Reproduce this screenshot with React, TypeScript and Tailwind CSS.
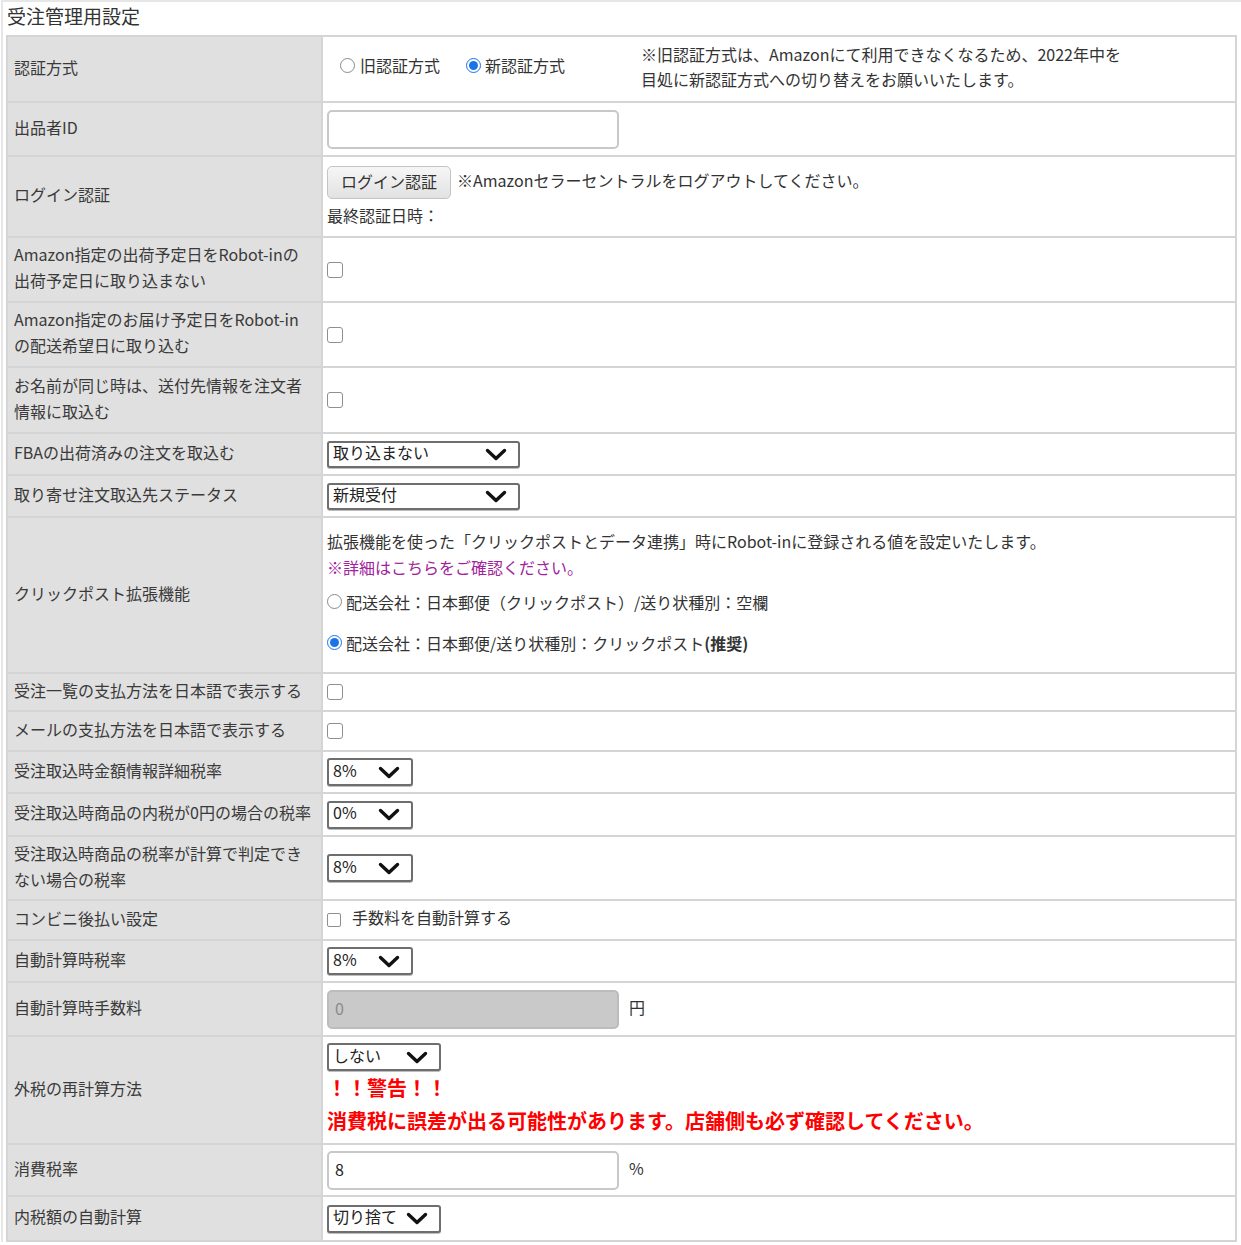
import React from "react";

const Chevron = () => (
  <svg width="22" height="13" viewBox="0 0 22 13" className="shrink-0">
    <path d="M2.5 2.5 L11 10.5 L19.5 2.5" fill="none" stroke="#111" strokeWidth="3.4" strokeLinecap="round" strokeLinejoin="round" />
  </svg>
);

const Select = ({ value, w, h = "h-[28px]" }: { value: string; w: string; h?: string }) => (
  <div className={`${w} ${h} flex items-center justify-between rounded-[3px] border-2 border-[#6e6e6e] bg-white pl-[4px] pr-[11px] shadow-[0_1px_0_#bdbdbd]`}>
    <span className="-mt-[5px] leading-none text-[#222]">{value}</span>
    <Chevron />
  </div>
);

const Radio = ({ checked = false }: { checked?: boolean }) =>
  checked ? (
    <span className="flex h-[15px] w-[15px] shrink-0 items-center justify-center rounded-full border-[1.5px] border-[#1a73e8] bg-white">
      <span className="h-[9px] w-[9px] rounded-full bg-[#1a73e8]" />
    </span>
  ) : (
    <span className="h-[15px] w-[15px] shrink-0 rounded-full border-[1.5px] border-[#8a8a8a] bg-white" />
  );

const Checkbox = ({ small = false }: { small?: boolean }) => (
  <span
    className={
      small
        ? "h-[14px] w-[14px] shrink-0 rounded-[2px] border-[1.5px] border-[#8f8f8f] bg-white"
        : "h-[16px] w-[16px] shrink-0 rounded-[3px] border-[1.5px] border-[#8f8f8f] bg-white"
    }
  />
);

const TextBox = ({ value = "", disabled = false }: { value?: string; disabled?: boolean }) => (
  <div
    className={
      disabled
        ? "flex h-[39px] w-[292px] items-center rounded-[5px] border-2 border-[#bcbcbc] bg-[#c9c9c9] px-[6px] pb-[3px] text-[#8a8a8a]"
        : "flex h-[39px] w-[292px] items-center rounded-[5px] border-2 border-[#c8c8c8] bg-white px-[6px] pb-[3px] text-[#222]"
    }
  >
    {value}
  </div>
);

const Row = ({ label, h, children, last = false }: { label: React.ReactNode; h: string; children?: React.ReactNode; last?: boolean }) => (
  <div className={`flex ${h} border-t-2 border-[#d5d5d5] ${last ? "border-b-2" : ""}`}>
    <div className="flex w-[315px] shrink-0 items-center whitespace-nowrap border-r-2 border-[#d5d5d5] bg-[#e0e0e0] pb-[5px] pl-[6px] leading-[26px] text-[#3a3a3a]">
      <div>{label}</div>
    </div>
    <div className="flex min-w-0 flex-1 items-center bg-white pl-[4px]">{children}</div>
  </div>
);

export default function App() {
  return (
    <div className="min-h-[1245px] w-[1241px] bg-white font-['Noto_Sans_CJK_JP','Noto_Sans',sans-serif] text-[16px] text-[#333]">
      <div className="ml-[1px] border-l-2 border-t-2 border-[#e6e6e6] pl-[3px]">
        <div className="flex h-[33px] items-center pb-[5px] pl-[1px] text-[19px] text-[#333]">受注管理用設定</div>
        <div className="w-[1231px] border-x-2 border-[#d5d5d5]">
          <Row label="認証方式" h="h-[66px]">
            <div className="flex w-[314px] items-center pb-[8px] pl-[13px]">
              <Radio />
              <span className="ml-[5px]">旧認証方式</span>
              <span className="ml-[26px]"><Radio checked /></span>
              <span className="ml-[4px]">新認証方式</span>
            </div>
            <div className="pb-[4px] leading-[25px]">
              ※旧認証方式は、Amazonにて利用できなくなるため、2022年中を
              <br />
              目処に新認証方式への切り替えをお願いいたします。
            </div>
          </Row>
          <Row label="出品者ID" h="h-[54px]">
            <TextBox />
          </Row>
          <Row label="ログイン認証" h="h-[81px]">
            <div className="flex flex-col">
              <div className="flex items-center">
                <div className="flex h-[33px] w-[124px] items-center justify-center rounded-[5px] border border-[#c4c4c4] bg-gradient-to-b from-[#f6f6f6] to-[#e2e2e2] pb-[3px] text-[#333]">
                  ログイン認証
                </div>
                <span className="ml-[6px] pb-[4px]">※Amazonセラーセントラルをログアウトしてください。</span>
              </div>
              <div className="mt-[3px] leading-[26px]">最終認証日時：</div>
            </div>
          </Row>
          <Row label={<>Amazon指定の出荷予定日をRobot-inの<br />出荷予定日に取り込まない</>} h="h-[65px]">
            <Checkbox />
          </Row>
          <Row label={<>Amazon指定のお届け予定日をRobot-in<br />の配送希望日に取り込む</>} h="h-[65px]">
            <Checkbox />
          </Row>
          <Row label={<>お名前が同じ時は、送付先情報を注文者<br />情報に取込む</>} h="h-[66px]">
            <Checkbox />
          </Row>
          <Row label="FBAの出荷済みの注文を取込む" h="h-[42px]">
            <Select value="取り込まない" w="w-[193px]" h="h-[27px]" />
          </Row>
          <Row label="取り寄せ注文取込先ステータス" h="h-[42px]">
            <Select value="新規受付" w="w-[193px]" h="h-[27px]" />
          </Row>
          <Row label="クリックポスト拡張機能" h="h-[156px]">
            <div className="flex flex-col pb-[7px] leading-[26px]">
              <div>拡張機能を使った「クリックポストとデータ連携」時にRobot-inに登録される値を設定いたします。</div>
              <div className="text-[#a0239c]">※詳細はこちらをご確認ください。</div>
              <div className="mt-[9px] flex items-center">
                <Radio />
                <span className="ml-[4px]">配送会社：日本郵便（クリックポスト）/送り状種別：空欄</span>
              </div>
              <div className="mt-[15px] flex items-center">
                <Radio checked />
                <span className="ml-[4px]">
                  配送会社：日本郵便/送り状種別：クリックポスト<b className="font-bold">(推奨)</b>
                </span>
              </div>
            </div>
          </Row>
          <Row label="受注一覧の支払方法を日本語で表示する" h="h-[38px]">
            <Checkbox />
          </Row>
          <Row label="メールの支払方法を日本語で表示する" h="h-[40px]">
            <Checkbox />
          </Row>
          <Row label="受注取込時金額情報詳細税率" h="h-[42px]">
            <Select value="8%" w="w-[86px]" />
          </Row>
          <Row label="受注取込時商品の内税が0円の場合の税率" h="h-[43px]">
            <Select value="0%" w="w-[86px]" />
          </Row>
          <Row label={<>受注取込時商品の税率が計算で判定でき<br />ない場合の税率</>} h="h-[64px]">
            <Select value="8%" w="w-[86px]" />
          </Row>
          <Row label="コンビニ後払い設定" h="h-[40px]">
            <Checkbox small />
            <span className="ml-[11px] pb-[6px]">手数料を自動計算する</span>
          </Row>
          <Row label="自動計算時税率" h="h-[42px]">
            <Select value="8%" w="w-[86px]" />
          </Row>
          <Row label="自動計算時手数料" h="h-[54px]">
            <TextBox value="0" disabled />
            <span className="ml-[10px] pb-[4px]">円</span>
          </Row>
          <Row label="外税の再計算方法" h="h-[108px]">
            <div className="flex flex-col">
              <Select value="しない" w="w-[114px]" />
              <div className="text-[20px] font-bold leading-[33px] text-[#ff0000]">！！警告！！</div>
              <div className="text-[20px] font-bold leading-[33px] text-[#ff0000]">
                消費税に誤差が出る可能性があります。店舗側も必ず確認してください。
              </div>
            </div>
          </Row>
          <Row label="消費税率" h="h-[52px]">
            <TextBox value="8" />
            <span className="ml-[10px] pb-[4px]">%</span>
          </Row>
          <Row label="内税額の自動計算" h="h-[47px]" last>
            <Select value="切り捨て" w="w-[114px]" />
          </Row>
        </div>
      </div>
    </div>
  );
}
